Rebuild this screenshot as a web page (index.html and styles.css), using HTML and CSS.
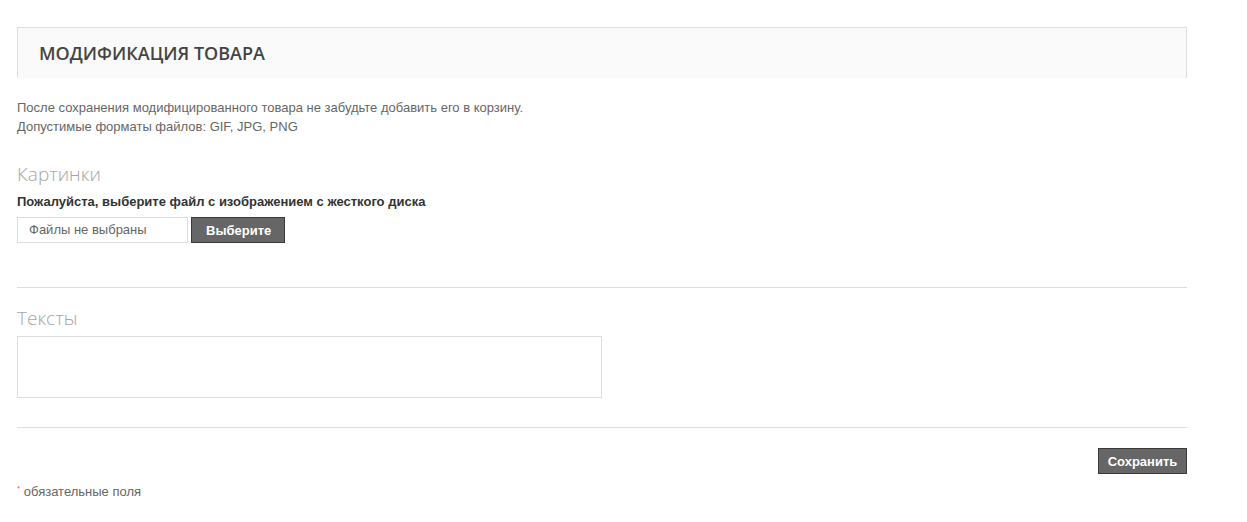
FILE: index.html
```html
<!DOCTYPE html>
<html>
<head>
<meta charset="utf-8">
<link rel="stylesheet" href="styles.css">
</head>
<body>
<div class="page">
  <div class="page-head"><h1>МОДИФИКАЦИЯ ТОВАРА</h1></div>
  <div class="intro">
    <p>После сохранения модифицированного товара не забудьте добавить его в корзину.</p>
    <p>Допустимые форматы файлов: GIF, JPG, PNG</p>
  </div>
  <div class="section">
    <h2>Картинки</h2>
    <div class="label">Пожалуйста, выберите файл с изображением с жесткого диска</div>
    <div class="file-row">
      <div class="file-name">Файлы не выбраны</div>
      <button class="btn">Выберите</button>
    </div>
  </div>
  <hr class="sep sep-1">
  <div class="section">
    <h2>Тексты</h2>
    <textarea class="textarea"></textarea>
  </div>
  <hr class="sep sep-2">
  <div class="actions"><button class="btn">Сохранить</button></div>
  <div class="required"><span class="star">*</span> обязательные поля</div>
</div>
</body>
</html>
```
FILE: styles.css
```css
html, body { margin: 0; padding: 0; background: #fff; }
body { font-family: "Liberation Sans", Arial, sans-serif; font-size: 13px; color: #666; }
.page { width: 1170px; margin-left: 17px; padding-top: 27px; }
.page-head {
  height: 51px;
  border: 1px solid #ddd;
  border-bottom: none;
  background: #fafafa;
  display: flex;
  align-items: center;
  padding-left: 21px;
  box-sizing: border-box;
}
.page-head h1 {
  margin: 0;
  font-family: "Open Sans", sans-serif;
  font-weight: 600;
  font-size: 18px;
  color: #444;
}
.intro { margin-top: 20px; }
.intro p { margin: 0; line-height: 19px; }
.section h2 {
  margin: 0;
  font-family: "Open Sans", sans-serif;
  font-weight: 300;
  font-size: 19px;
  color: #a5a5a5;
  line-height: 26px;
}
.intro + .section { margin-top: 25px; }
.label { font-weight: bold; color: #333; line-height: 16px; margin-top: 7px; }
.file-row { display: flex; gap: 3px; margin-top: 7px; }
.file-name {
  width: 171px;
  height: 26px;
  box-sizing: border-box;
  border: 1px solid #ddd;
  padding-left: 11px;
  line-height: 24px;
  color: #666;
  font-size: 13px;
}
.btn {
  height: 26px;
  box-sizing: border-box;
  background: #666;
  border: 1px solid #3a3a3a;
  color: #fff;
  font-family: "Liberation Sans", Arial, sans-serif;
  font-weight: bold;
  font-size: 13px;
  padding: 0 14px;
  margin: 0;
}
.file-row .btn { width: 94px; }
.sep { border: none; border-top: 1px solid #ddd; margin: 0; }
.sep-1 { margin-top: 44px; }
.sep + .section { margin-top: 17px; }
.textarea {
  display: block;
  width: 585px;
  height: 62px;
  box-sizing: border-box;
  border: 1px solid #ddd;
  margin-top: 5px;
  resize: none;
}
.sep-2 { margin-top: 29px; }
.actions { display: flex; justify-content: flex-end; margin-top: 20px; }
.actions .btn { width: 89px; padding: 0; }
.required { margin-top: 10px; color: #666; line-height: 16px; }
.star { color: #e8604c; font-size: 8px; vertical-align: top; position: relative; top: -3px; }
```
